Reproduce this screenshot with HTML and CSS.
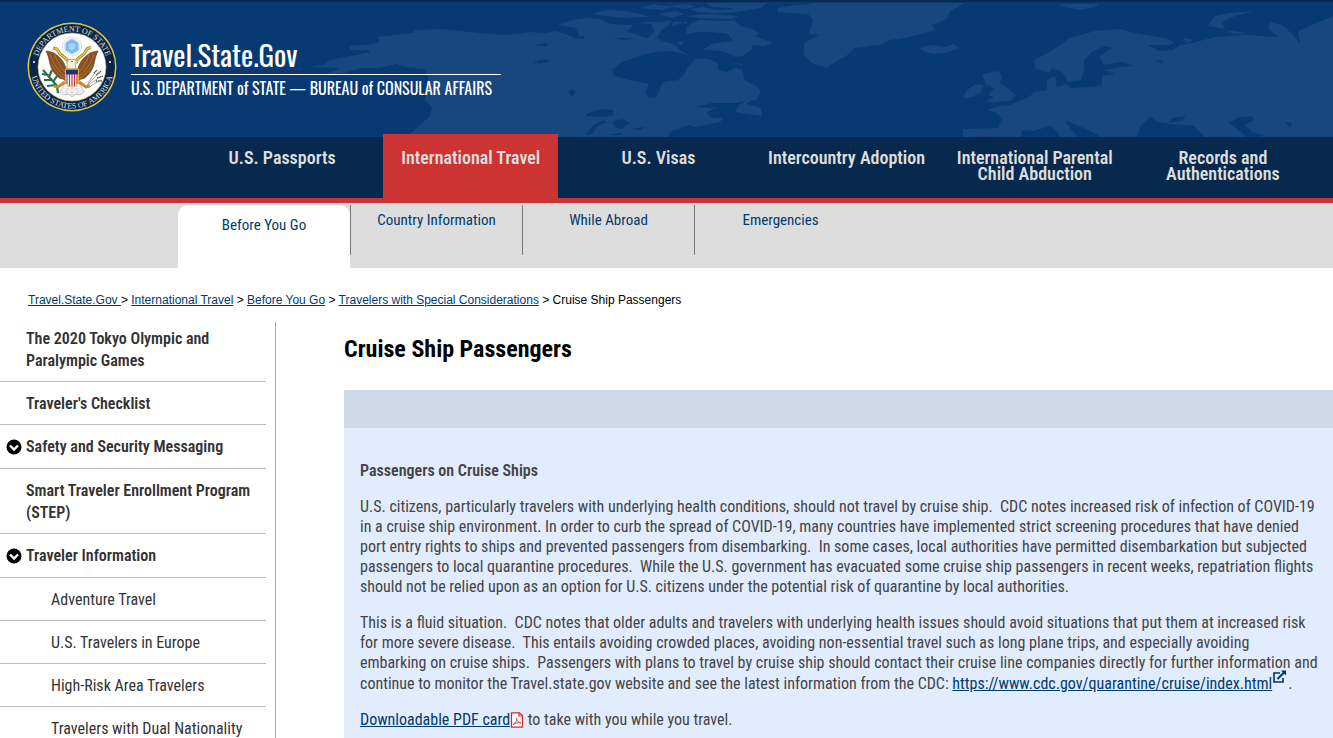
FILE: index.html
```
<!DOCTYPE html>
<html lang="en">
<head>
  <meta charset="UTF-8">
  <meta name="viewport" content="width=device-width, initial-scale=1.0">
  <title>Cruise Ship Passengers</title>
  <link rel="stylesheet" href="styles.css">
</head>
<body>
  <header class="site-header">
    <!-- World map background -->
    <svg class="map" viewBox="0 0 1333 135" preserveAspectRatio="xMinYMin slice" aria-hidden="true">
      <g transform="translate(0 -2)">
        <g fill="#17477e">
          <path d="M310 67L323 65 330 60 350 56 371 52 368 50 350 50 349 46 374 44 380 41 376 37 395 35 413 33 415 30 440 29 470 32 500 35 515 34 530 32 545 33 556 31 568 35 577 38 579 35 576 28 557 25 573 20 588 18 600 19 610 24 633 25 645 22 660 22 672 20 668 26 661 31 657 38 665 42 674 44 681 51 688 55 700 57 718 61 742 64 744 80 758 87 761 92 756 100 735 103 712 103 696 107 710 108 718 107 706 113 712 118 724 118 720 122 695 127 690 125 672 131 668 137 408 137 411 133 430 116 432 107 425 100 427 88 428 76 424 69 405 67 396 64 380 68 360 68 345 73 327 74 340 68Z"/>
          <path d="M735 111L740 104 752 99 746 104 761 108 762 116 748 114 740 113Z"/>
          <path d="M591 14L607 10 625 11 640 14 650 17 625 18 607 16ZM640 8L654 4 672 7 662 10ZM658 14L676 11 684 14 672 18ZM667 6L688 4 696 7 684 9ZM684 16L710 14 738 16 732 19 700 18ZM690 9L703 7 718 10 740 9 740 12 712 13 697 12ZM705 3L768 3 760 8 745 11 728 8 712 7Z"/>
          <path d="M673 22L688 22 680 29 671 33ZM690 24L700 20 722 21 735 21 740 26 750 28 759 33 755 36 773 43 764 46 752 45 752 50 742 56 736 57 722 51 702 50 712 44 733 41 728 34 712 32 698 32 687 34 685 29ZM676 41L684 42 681 46Z"/>
          <path d="M777 8L789 6 808 4 812 3 965 3 950 11 947 19 932 25 935 30 925 33 905 38 890 40 880 45 855 48 845 57 838 60 827 68 812 63 804 55 804 43 811 39 820 35 809 34 813 20 808 14 778 12Z"/>
          <path d="M919 48L930 45 945 47 953 44 960 48 945 53 935 54 925 52Z"/>
          <path d="M982 74L998 71 1002 77 1000 83 1008 88 1016 96 1010 101 990 102 984 103 994 97 988 95 994 88 986 84ZM963 97L968 89 976 84 984 85 980 93 972 97 965 98Z"/>
          <path d="M963 137L963 129 998 128 1002 119 997 113 987 110 1000 106 1010 105 1030 96 1035 92 1047 90 1047 80 1055 76 1057 87 1066 84 1070 88 1095 87 1102 84 1102 76 1115 74 1103 70 1120 67 1133 66 1122 62 1103 65 1099 56 1113 48 1105 46 1092 52 1084 60 1084 70 1081 80 1068 82 1062 72 1052 68 1048 73 1035 68 1034 60 1050 52 1070 38 1095 31 1120 29 1135 33 1165 38 1174 42 1170 45 1148 45 1158 51 1173 50 1180 45 1192 43 1215 37 1245 35 1278 37 1268 29 1270 22 1282 25 1290 32 1300 43 1298 31 1333 16 1333 137Z"/>
          <path d="M1208 26L1215 16 1230 13 1255 11 1235 16 1222 22 1225 29ZM1225 30L1247 33 1234 34ZM1184 38L1194 40 1186 43ZM1056 4L1100 4 1095 7 1080 10 1070 8Z"/>
        </g>
        <g fill="#073a72">
          <path d="M612 70L622 62 640 56 655 52 672 51 684 54 700 57 716 60 742 65 744 70 735 68 726 72 718 70 718 63 706 58 695 59 688 67 684 75 678 80 663 82 660 88 657 97 648 98 645 93 649 84 630 80 615 76Z"/>
          <path d="M627 31L636 23 652 24 654 32 648 38 640 36ZM670 27L684 22 687 31 681 38 673 38ZM679 48L700 37 722 33 732 39 706 44 690 53Z"/>
          <path d="M586 114L602 109 613 110 614 115 603 117 587 116ZM586 135L592 126 603 120 607 122 597 127 592 134ZM612 122L622 119 630 123 622 129 616 128ZM630 129L645 127 640 130ZM607 135L620 133 622 135ZM568 91L574 89 575 93 572 97ZM572 38L583 36 585 39ZM533 62L544 59 550 61 539 64ZM534 45L547 43 547 46ZM611 38L634 38 624 40Z"/>
          <path d="M1137 137L1140 126 1150 117 1158 122 1170 124 1194 126 1205 137ZM1168 123L1172 118 1186 116 1182 121ZM1229 123L1240 117 1252 116 1254 120 1245 125 1252 132 1263 135 1262 137 1246 137 1240 131ZM1285 122L1292 123 1290 128ZM1021 137L1022 130 1034 131 1050 126 1057 131 1060 137ZM1065 120L1077 125 1098 135 1098 137 1078 137 1070 128ZM1155 60L1162 60 1163 64Z"/>
        </g>
      </g>
    </svg>

    <a class="brand" href="#">
      <svg class="seal" viewBox="0 0 90 90" role="img" aria-label="U.S. Department of State seal">
        <defs>
          <path id="arcTop" d="M9.500 45a35.500 35.500 0 0 1 71 0"/>
          <path id="arcBottom" d="M3.500 45a41.500 41.500 0 0 0 83 0"/>
        </defs>
        <circle cx="45" cy="45" r="44.500" fill="#e7c24a"/>
        <circle cx="45" cy="45" r="43" fill="#0b2545"/>
        <circle cx="45" cy="45" r="34" fill="#fff" stroke="#c9b368" stroke-width=".6"/>
        <g class="seal-text">
          <text><textPath href="#arcTop" startOffset="50%">DEPARTMENT OF STATE</textPath></text>
          <text><textPath href="#arcBottom" startOffset="50%">UNITED STATES OF AMERICA</textPath></text>
        </g>
        <circle cx="7" cy="40" r="1" fill="#fff"/>
        <circle cx="83" cy="40" r="1" fill="#fff"/>
        <!-- crest -->
        <circle cx="45" cy="24.500" r="9.500" fill="#fff" stroke="#b5bcc4" stroke-dasharray="1 1"/>
        <circle cx="45" cy="24.500" r="7.600" fill="none" stroke="#c3cad2" stroke-width=".7"/>
        <path d="M45 17l6.500 3.700v7.600L45 32l-6.500-3.700v-7.600z" fill="#79bdee"/>
        <circle cx="45" cy="24.500" r="4" fill="#a3d3f5" stroke="#5ba7df" stroke-dasharray="1 1"/>
        <!-- tail -->
        <path d="M38 61l-5 9 4 3 4-1 4 3 4-3 4 1 4-3-5-9z" fill="#f0f0f0" stroke="#aaa" stroke-width=".7"/>
        <path d="M41 64l-2 7M45 64v9M49 64l2 7" stroke="#aaa" stroke-width=".8" stroke-dasharray="1 1"/>
        <!-- olive branch and arrows -->
        <path d="M31 65L16 48M21 53l-6-1M22 55l3-7M25 58l-8 0M26 60l4-6M29 63l-9 1M30 64l1 7" fill="none" stroke="#247349" stroke-width="2.200"/>
        <path d="M60 63l14-14M61 63l14-9M61 61l8-12M62 65l12-7" fill="none" stroke="#aaa" stroke-width="1"/>
        <path d="M67 51l3-3M69 53l5-4M70 56l6-2M69 59l6 0" stroke="#444" stroke-width="1.500" stroke-dasharray="1 .7"/>
        <!-- wings -->
        <path d="M40 49C38 42 35 36 27 31c-3-1-5-2-8-2 2 4 3 8 4 13 1 4 3 8 6 11 2 2 4 4 7 4l4 3zM50 49c2-7 5-13 13-18 3-1 5-2 8-2-2 4-3 8-4 13-1 4-3 8-6 11-2 2-4 4-7 4l-4 3z" fill="#8a5122" stroke="#60391b" stroke-width=".6"/>
        <path d="M23 32c3 9 8 17 16 23M28 33c3 8 6 13 11 18M25 43c3 6 7 10 13 14M67 32c-3 9-8 17-16 23M62 33c-3 8-6 13-11 18M65 43c-3 6-7 10-13 14" fill="none" stroke="#b57a43" stroke-width=".8"/>
        <!-- ribbon -->
        <path d="M26 26l4 1 3 5 4 3 5 5M64 25l-4 2-3 5-4 3-5 5" fill="none" stroke="#a67c1b" stroke-width="3"/>
        <path d="M26 26l4 1 3 5 4 3 5 5M64 25l-4 2-3 5-4 3-5 5" fill="none" stroke="#ecc653" stroke-width="1.500"/>
        <path d="M38 60l-7 5-4-1M52 60l7 5 4-1" fill="none" stroke="#c28d2a" stroke-width="3"/>
        <path d="M40 47v-6l1-3 3-1 4 1 3 3-3 0 1 6z" fill="#f3f0e7" stroke="#b58a2e" stroke-width=".7"/>
        <circle cx="45" cy="39.500" r=".7" fill="#222"/>
        <!-- shield -->
        <path d="M38.500 47h13v14q-2 3-6.500 4-4.500-1-6.500-4z" fill="#fff" stroke="#e2b42d"/>
        <path d="M40 52v10M42.500 52v12M45 52v12M47.500 52v12M50 52v10" stroke="#c22d4a" stroke-width="1.200"/>
        <path d="M39 47.500h12v5H39z" fill="#23347c"/>
      </svg>
      <span class="brand-text">
        <span class="brand-name">Travel.State.Gov</span>
        <span class="brand-dept">U.S. DEPARTMENT of STATE — BUREAU of CONSULAR AFFAIRS</span>
      </span>
    </a>
  </header>

  <nav class="main-nav" aria-label="Main">
    <a href="#">U.S. Passports</a>
    <a class="active" href="#">International Travel</a>
    <a href="#">U.S. Visas</a>
    <a href="#">Intercountry Adoption</a>
    <a href="#">International Parental<br>Child Abduction</a>
    <a href="#">Records and<br>Authentications</a>
  </nav>

  <nav class="sub-nav" aria-label="International Travel">
    <a class="active" href="#">Before You Go</a>
    <a href="#">Country Information</a>
    <a href="#">While Abroad</a>
    <a href="#">Emergencies</a>
  </nav>

  <div class="breadcrumb">
    <a href="#">Travel.State.Gov&nbsp;</a>&gt;
    <a href="#">International Travel</a> &gt;
    <a href="#">Before You Go</a> &gt;
    <a href="#">Travelers with Special Considerations</a> &gt;
    <span>Cruise Ship Passengers</span>
  </div>

  <div class="page">
    <aside class="sidebar">
      <ul>
        <li><a href="#">The 2020 Tokyo Olympic and Paralympic Games</a></li>
        <li><a href="#">Traveler's Checklist</a></li>
        <li class="expandable">
          <svg class="chevron" viewBox="0 0 16 16" aria-hidden="true"><circle cx="8" cy="8" r="7.500"/><path d="M4 6.500l4 4 4-4" fill="none" stroke="#fff" stroke-width="2.400"/></svg>
          <a href="#">Safety and Security Messaging</a>
        </li>
        <li><a href="#">Smart Traveler Enrollment Program (STEP)</a></li>
        <li class="expandable">
          <svg class="chevron" viewBox="0 0 16 16" aria-hidden="true"><circle cx="8" cy="8" r="7.500"/><path d="M4 6.500l4 4 4-4" fill="none" stroke="#fff" stroke-width="2.400"/></svg>
          <a href="#">Traveler Information</a>
        </li>
        <li class="child"><a href="#">Adventure Travel</a></li>
        <li class="child"><a href="#">U.S. Travelers in Europe</a></li>
        <li class="child"><a href="#">High-Risk Area Travelers</a></li>
        <li class="child"><a href="#">Travelers with Dual Nationality</a></li>
      </ul>
    </aside>

    <main class="content">
      <h1>Cruise Ship Passengers</h1>
      <section class="panel">
        <div class="panel-head"></div>
        <div class="panel-body">
          <h2>Passengers on Cruise Ships</h2>
          <p>U.S. citizens, particularly travelers with underlying health conditions, should not travel by cruise ship.&nbsp; CDC notes increased risk of infection of COVID-19 in a cruise ship environment. In order to curb the spread of COVID-19, many countries have implemented strict screening procedures that have denied port entry rights to ships and prevented passengers from disembarking.&nbsp; In some cases, local authorities have permitted disembarkation but subjected passengers to local quarantine procedures.&nbsp; While the U.S. government has evacuated some cruise ship passengers in recent weeks, repatriation flights should not be relied upon as an option for U.S. citizens under the potential risk of quarantine by local authorities.</p>
          <p>This is a fluid situation.&nbsp; CDC notes that older adults and travelers with underlying health issues should avoid situations that put them at increased risk for more severe disease.&nbsp; This entails avoiding crowded places, avoiding non-essential travel such as long plane trips, and especially avoiding embarking on cruise ships.&nbsp; Passengers with plans to travel by cruise ship should contact their cruise line companies directly for further information and continue to monitor the Travel.state.gov website and see the latest information from the CDC: <a href="#">https://www.cdc.gov/quarantine/cruise/index.html</a><svg class="external" viewBox="0 0 16 14" aria-hidden="true"><path d="M8 3H2v9h9V8" fill="none" stroke="#003366" stroke-width="1.600"/><path d="M5.500 9L12.500 2" stroke="#003366" stroke-width="2"/><path d="M9 .5h5v5z" fill="#003366"/></svg>.</p>
          <p><a href="#">Downloadable PDF card</a><svg class="pdf" viewBox="0 0 14 16" aria-hidden="true"><path d="M1.500.8h8l3 3v11.400h-11z" fill="#fff" stroke="#d52b2b" stroke-width="1.200"/><path d="M9 .8V4h3.500" fill="none" stroke="#d52b2b" stroke-width="1.200"/><path d="M3 12.500c3-1.500 4.500-5.500 3.500-6.500-1 .5 1.500 5 4.500 5-2-1-5.500.2-8 1.500z" fill="none" stroke="#d52b2b" stroke-width=".8"/></svg> to take with you while you travel.</p>
        </div>
      </section>
    </main>
  </div>
</body>
</html>
```
FILE: styles.css
```
* {
  box-sizing: border-box;
}
body {
  margin: 0;
  font-family: "Roboto Condensed", Roboto, sans-serif;
  font-size: 16px;
  line-height: 20px;
  color: #444;
  background-color: #fff;
  overflow-x: hidden;
}
a {
  color: #003a70;
}

/* Header */
.site-header {
  position: relative;
  padding: 20px 27px 25px;
  border-top: 2px solid #06294d;
  background-color: #073a72;
  overflow: hidden;
}
.map {
  position: absolute;
  top: 0;
  left: 0;
  width: 100%;
  height: 100%;
}
.brand {
  position: relative;
  display: flex;
  align-items: flex-start;
  gap: 14px;
  color: #fff;
  text-decoration: none;
}
.seal {
  width: 90px;
  height: 90px;
}
.seal-text {
  font-family: "Liberation Serif", serif;
  font-size: 8px;
  fill: #dfe4ea;
  text-anchor: middle;
}
.brand-text {
  display: flex;
  flex-direction: column;
  width: 370px;
  padding-top: 12px;
  font-family: Oswald, "Roboto Condensed", sans-serif;
}
.brand-name {
  padding-bottom: 1px;
  border-bottom: 1px solid #fff;
  font-size: 29px;
  line-height: 39px;
}
.brand-dept {
  font-size: 16px;
  line-height: 26px;
  white-space: nowrap;
}

/* Main navigation */
.main-nav {
  display: grid;
  grid-template-columns: repeat(6, 1fr);
  padding: 0 16px 0 188px;
  border-bottom: 5px solid #cc3333;
  background-color: #06294d;
}
.main-nav a {
  min-height: 61px;
  padding-top: 13px;
  color: #ddd;
  font-size: 18px;
  font-weight: 600;
  line-height: 16px;
  text-align: center;
  text-decoration: none;
}
.main-nav .active {
  position: relative;
  margin: -3px 6px 0 7px;
  padding-top: 16px;
  background-color: #cc3333;
}

/* Sub navigation */
.sub-nav {
  display: flex;
  height: 65px;
  padding: 2px 0 0 178px;
  background-color: #ddd;
}
.sub-nav a {
  width: 172px;
  height: 50px;
  padding-top: 5px;
  border-left: 1px solid #777;
  font-size: 15px;
  text-align: center;
  text-decoration: none;
}
.sub-nav .active {
  height: 63px;
  padding-top: 10px;
  border-left: 0;
  border-radius: 10px 10px 0 0;
  background-color: #fff;
}

/* Breadcrumb */
.breadcrumb {
  padding: 22px 28px 12px;
  color: #000;
  font-family: "Liberation Sans", Arial, sans-serif;
  font-size: 12px;
}

/* Page */
.page {
  display: flex;
}
.sidebar {
  flex: 0 0 276px;
  padding-right: 9px;
  border-right: 1px solid #aaa;
}
.sidebar ul {
  margin: 0;
  padding: 0;
  list-style: none;
}
.sidebar li {
  padding: 11px 10px 9px 26px;
  border-bottom: 1px solid #bbb;
  line-height: 22px;
}
.sidebar li:first-child {
  padding-top: 6px;
}
.sidebar a {
  color: #333;
  font-weight: 600;
  text-decoration: none;
}
.sidebar .expandable {
  display: flex;
  align-items: center;
  gap: 4px;
  padding: 11px 10px 10px 6px;
}
.chevron {
  width: 16px;
  height: 16px;
}
.sidebar .child {
  padding-left: 51px;
}
.sidebar .child a {
  font-weight: normal;
}
.content {
  flex: 1;
  padding-left: 68px;
}
h1 {
  margin: 12px 0 26px;
  color: #000;
  font-size: 24px;
  line-height: 30px;
}
.panel {
  background-color: #e1ecff;
}
.panel-head {
  height: 38px;
  background-color: #cdd9e9;
}
.panel-body {
  padding: 33px 15px 16px 16px;
}
h2 {
  margin: 0 0 16px;
  font-size: 16px;
  font-weight: 600;
}
.panel p {
  margin: 0 0 16px;
}
.external {
  width: 16px;
  height: 14px;
  margin-top: -3px;
  vertical-align: 5px;
}
.pdf {
  width: 14px;
  height: 16px;
  vertical-align: -3px;
}
```
